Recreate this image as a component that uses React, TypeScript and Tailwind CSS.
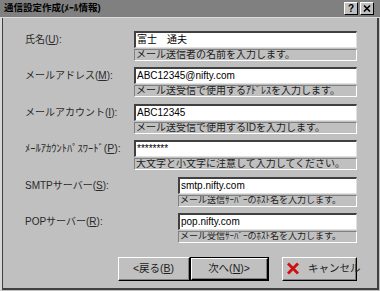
import React from "react";

const font = "[font-family:'Liberation_Sans','Noto_Sans_CJK_JP',sans-serif]";

type Row = {
  label: React.ReactNode;
  value: string;
  hint: string;
  wide?: boolean;
  small?: boolean;
};

const rows: Row[] = [
  { label: <>氏名(<u>U</u>):</>, value: "富士　通夫", hint: "メール送信者の名前を入力します。" },
  { label: <>メールアドレス(<u>M</u>):</>, value: "ABC12345@nifty.com", hint: "メール送受信で使用するｱﾄﾞﾚｽを入力します。" },
  { label: <>メールアカウント(<u>I</u>):</>, value: "ABC12345", hint: "メール送受信で使用するIDを入力します。" },
  { label: <>ﾒｰﾙｱｶｳﾝﾄﾊﾟｽﾜｰﾄﾞ(<u>P</u>):</>, value: "********", hint: "大文字と小文字に注意して入力してください。", small: true },
  { label: <>SMTPサーバー(<u>S</u>):</>, value: "smtp.nifty.com", hint: "メール送信ｻｰﾊﾞｰのﾎｽﾄ名を入力します。", wide: true },
  { label: <>POPサーバー(<u>R</u>):</>, value: "pop.nifty.com", hint: "メール受信ｻｰﾊﾞｰのﾎｽﾄ名を入力します。", wide: true },
];

const FieldRow = ({ row }: { row: Row }) => {
  return (
    <div className="flex">
      <div
        className={
          (row.wide ? "w-[153px] " : "w-[109px] ") +
          "shrink-0 h-[17px] flex items-center text-[#2a2a2a] whitespace-nowrap " +
          (row.small ? "text-[10.5px]" : "text-[10px]")
        }
      >
        {row.label}
      </div>
      <div className="flex-1 min-w-0 flex flex-col gap-px">
        <div className="h-[17px] bg-white border-t-2 border-l-2 border-t-[#404040] border-l-[#404040] border-b border-r border-b-[#e0e0e0] border-r-[#e0e0e0] flex items-center pl-[1px] text-[10px] text-black leading-none whitespace-nowrap">
          {row.value}
        </div>
        <div
          className={
            "h-[12px] bg-[#c0c0c0] border border-t-[#808080] border-l-[#808080] border-b-white border-r-white flex items-center pl-[1px] text-[#202020] leading-none whitespace-nowrap overflow-hidden " +
            (row.wide ? "text-[9px]" : "text-[10px]")
          }
        >
          {row.hint}
        </div>
      </div>
    </div>
  );
};

const Button = ({ children, def, className }: { children: React.ReactNode; def?: boolean; className?: string }) => {
  return (
    <div className={(def ? "border border-black " : "") + "h-[24px] " + (className || "")}>
      <div className="h-full border-t border-l border-t-white border-l-white border-b border-r border-b-black border-r-black">
        <div className="h-full border-b border-r border-b-[#808080] border-r-[#808080] flex items-center justify-center text-[10.5px] text-[#202020] whitespace-nowrap">
          {children}
        </div>
      </div>
    </div>
  );
};

const TitleButton = ({ children }: { children: React.ReactNode }) => (
  <div className="w-[14px] h-[13px] bg-[#c0c0c0] border-t border-l border-t-white border-l-white border-b border-r border-b-black border-r-black flex items-center justify-center text-[10px] font-bold text-black leading-none">
    {children}
  </div>
);

export default function App() {
  return (
    <div className={"w-[380px] h-[291px] bg-[#c0c0c0] flex flex-col " + font}>
      <div className="h-[17px] bg-[#808080] flex items-center pl-[4px] pr-[6px]">
        <span className="text-[9.5px] font-bold text-black flex-1 whitespace-nowrap">
          通信設定作成(ﾒｰﾙ情報)
        </span>
        <div className="flex gap-[2px]">
          <TitleButton>?</TitleButton>
          <TitleButton>
            <svg width="8" height="7" viewBox="0 0 8 7">
              <path d="M1 0.5 L7 6.5 M7 0.5 L1 6.5" stroke="black" strokeWidth="1.6" />
            </svg>
          </TitleButton>
        </div>
      </div>
      <div className="flex-1 border-t border-t-[#dcdcdc] border-l-2 border-l-[#d8d8d8] border-r border-r-[#c0c0c0] border-b border-b-[#c0c0c0]">
        <div className="h-full border-l border-l-[#404040] border-r-2 border-r-[#404040] border-b-2 border-b-[#404040] pt-[13px] pl-[22px] pr-[20px] flex flex-col">
          <div className="flex flex-col gap-[6.4px]">
            {rows.map((row, i) => (
              <FieldRow key={i} row={row} />
            ))}
          </div>
          <div className="mt-[14px] flex justify-end">
            <Button className="w-[72px]">
              &lt;戻る(<u>B</u>)
            </Button>
            <Button def className="w-[79px]">
              次へ(<u>N</u>)&gt;
            </Button>
            <Button className="w-[75px] ml-[13px]">
              <div className="flex items-center w-full pl-[3px]">
                <svg className="shrink-0" width="14" height="13" viewBox="0 0 14 13">
                  <path d="M2 1.5 L12 11.5 M12 1.5 L2 11.5" stroke="#d01010" strokeWidth="2.8" />
                </svg>
                <span className="ml-[8px]">キャンセル</span>
              </div>
            </Button>
          </div>
        </div>
      </div>
    </div>
  );
}
